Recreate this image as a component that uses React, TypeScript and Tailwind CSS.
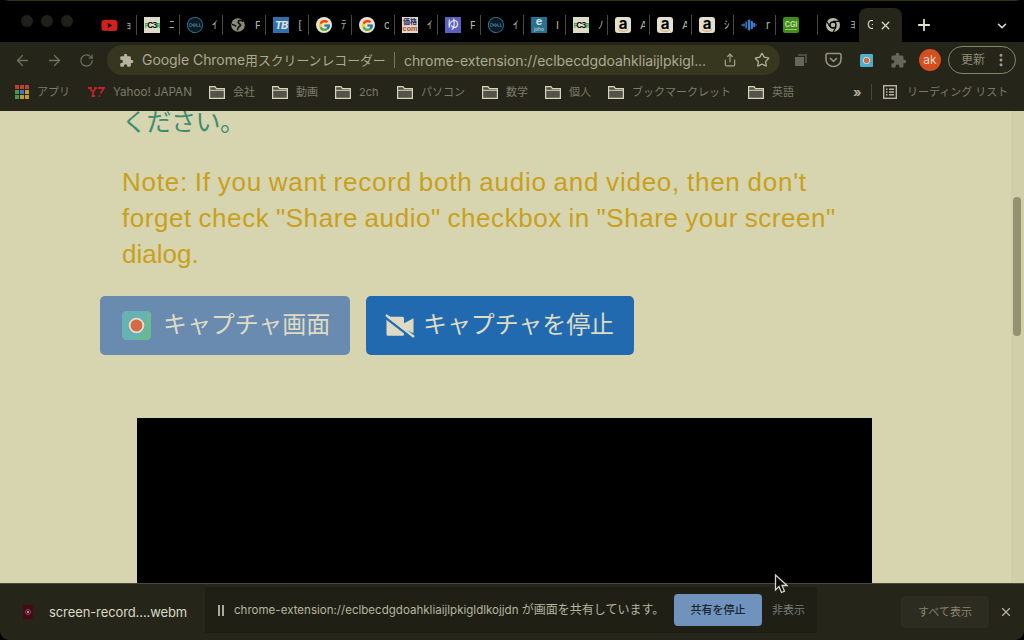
import React from "react";
import {
  ArrowLeft, ArrowRight, RotateCw, Star, Share, X, Plus, ChevronDown, EllipsisVertical,
} from "lucide-react";
import { FaYoutube } from "react-icons/fa";
import { FcGoogle } from "react-icons/fc";
import { SiDell } from "react-icons/si";
import { MdExtension } from "react-icons/md";

const DARK = "bg-[#26251a]";

const Tile = ({ className, children }: { className: string; children: React.ReactNode }) => (
  <span className={`flex h-4 w-4 shrink-0 flex-col items-center justify-center overflow-hidden ${className}`}>{children}</span>
);

const C3 = () => (
  <Tile className="bg-[#dedbc8] text-[8px] font-bold tracking-[-1px] text-black">
    <span><span className="text-[6px] text-green-600">F</span>C3<span className="text-[6px] text-green-600">R</span></span>
  </Tile>
);
const Amazon = () => (
  <Tile className="relative rounded-[3px] bg-[#e4e0d0]">
    <span className="-mt-1 text-[15px] font-bold leading-none text-black">a</span>
    <svg className="absolute bottom-0 left-0" width="16" height="5" viewBox="0 0 16 5"><path d="M3 1.5c3 2.4 7 2.4 10 0" stroke="#d9a066" strokeWidth="1" fill="none" /></svg>
  </Tile>
);
const Google = () => (
  <Tile className="rounded-full bg-[#e6e3d6]"><FcGoogle size={13} /></Tile>
);
const Dell = () => (
  <span className="flex h-4 w-4 shrink-0 items-center justify-center rounded-full bg-[#0c1a22]"><SiDell size={16} className="text-[#35789c]" /></span>
);

const tabs: { icon: React.ReactNode; text: string; w: string }[] = [
  { icon: <span className="flex h-4 w-4 shrink-0 items-center justify-center"><FaYoutube size={17} className="shrink-0 text-[#d4201c]" /></span>, text: "ｮ", w: "w-[43px]" },
  { icon: <C3 />, text: "ﾆ", w: "w-[43px]" },
  { icon: <Dell />, text: "ｲ", w: "w-[43px]" },
  {
    icon: (
      <svg width="16" height="16" viewBox="0 0 16 16" className="shrink-0">
        <circle cx="8" cy="8" r="6.8" fill="#8a8a7c" />
        <path d="M13.500 4.500c-2-1.800-5.300-1.300-5.300.7 0 1.500 2.300 1.500 2.300 3 0 1.200-1.500 1.300-2.200 2.300-.6.800-.3 2-1.300 2.500M2 7.500c2 0 2.800.8 4 1.800" stroke="#111" strokeWidth="1.7" fill="none" />
      </svg>
    ), text: "F", w: "w-[43px]",
  },
  { icon: <Tile className="bg-[#3170ae] text-[11px] font-bold italic tracking-[-1px] text-[#e4e4dc]">TB</Tile>, text: "[", w: "w-[43px]" },
  { icon: <Google />, text: "ﾃ", w: "w-[43px]" },
  { icon: <Google />, text: "c", w: "w-[43px]" },
  { icon: <Tile className="bg-[#dedbc8] text-[7px] font-bold leading-[7px] text-[#b34a34]"><span className="text-[#292968]">価格</span><span>com</span></Tile>, text: "ｲ", w: "w-[43px]" },
  { icon: <Tile className="bg-[#5a62bd] text-[12px] text-white">ゆ</Tile>, text: "F", w: "w-[43px]" },
  { icon: <Dell />, text: "ｲ", w: "w-[43px]" },
  { icon: <Tile className="bg-[#247291] text-[#dedbd0]"><span className="text-[11px] font-bold leading-[9px]">e</span><span className="text-[5px] leading-[7px]">joho</span></Tile>, text: "I", w: "w-[42px]" },
  { icon: <C3 />, text: "ﾉ", w: "w-[42px]" },
  { icon: <Amazon />, text: "A", w: "w-[42px]" },
  { icon: <Amazon />, text: "A", w: "w-[42px]" },
  { icon: <Amazon />, text: "ｼ", w: "w-[42px]" },
  {
    icon: (
      <svg width="16" height="16" viewBox="0 0 16 16" className="shrink-0">
        <path d="M.5 8h1.500M3 6.500v3M5.200 4.500v7" stroke="#3d7fc8" strokeWidth="1.500" />
        <path d="M6.800 3l2.400-.8v11.600L6.800 13zM9.800 3.500l2.300 1v7l-2.300 1zM12.300 6h1.700v4h-1.700zM14 7.500h2v1h-2z" fill="#3d7fc8" />
      </svg>
    ), text: "r", w: "w-[42px]",
  },
  { icon: <Tile className="rounded-[2px] bg-[#3f8f17] text-[7px] font-bold leading-[8px] text-[#c8dba8]"><span>CGI</span><span className="h-px w-3 bg-[#9cc47a]" /></Tile>, text: "", w: "w-[42px]" },
  {
    icon: (
      <svg width="16" height="16" viewBox="0 0 16 16" className="shrink-0">
        <circle cx="8" cy="8" r="7" fill="#b8b8a6" />
        <path d="M8 4.400h6M4.900 9.800 2 4.700M11.100 9.800 8.200 15" stroke="#000" strokeWidth="1.200" />
        <circle cx="8" cy="8" r="3" fill="#b8b8a6" stroke="#000" strokeWidth="1.400" />
      </svg>
    ), text: "ﾖ", w: "w-[41px]",
  },
];

const Folder = () => (
  <svg width="16" height="13" viewBox="0 0 16 13" className="shrink-0">
    <path d="M.6 12.400V.6h5.400l1.500 2h7.900v9.800z" fill="#53534a" stroke="#d5d5b8" strokeWidth="1.200" />
    <path d="M1 4.300h14" stroke="#d5d5b8" />
  </svg>
);

const folders: [string, string][] = [
  ["会社", "w-[63px]"], ["動画", "w-[63px]"], ["2ch", "w-[62px]"], ["パソコン", "w-[85px]"],
  ["数学", "w-[63px]"], ["個人", "w-[63px]"], ["ブックマークレット", "w-[140px]"], ["英語", "w-[105px]"],
];

const appDots = [
  "bg-[#c43d32]", "bg-[#c43d32]", "bg-[#c43d32]",
  "bg-[#3f9c52]", "bg-[#3c78c8]", "bg-[#c49a32]",
  "bg-[#3f9c52]", "bg-[#c49a32]", "bg-[#c49a32]",
];

const Recorder = ({ className, bg, edge }: { className: string; bg: string; edge: string }) => (
  <svg viewBox="0 0 28 28" className={className}>
    <rect width="28" height="28" rx="4" fill={bg} />
    <path d="M24 0a4 4 0 0 1 4 4v20a4 4 0 0 1-4 4H10l12-7z" fill={edge} />
    <circle cx="14" cy="14" r="7.500" fill="#e6ddc8" />
    <circle cx="14" cy="14" r="5.700" fill="#d66a45" />
  </svg>
);

export default function App() {
  return (
    <div className="h-[640px] w-[1024px] overflow-hidden bg-black font-[Inter,'Noto_Sans_CJK_JP',sans-serif]">
      <div className="flex h-full flex-col overflow-hidden rounded-[9px]">
        <div className="flex h-[42px] shrink-0 border-t border-[#34340c] bg-black">
          <div className="flex w-[94px] shrink-0 gap-2 pl-[21px] pt-[14px]">
            {[0, 1, 2].map((i) => <span key={i} className="h-3 w-3 rounded-full bg-[#20201a]" />)}
          </div>
          {tabs.map((t, i) => (
            <div key={i} className={`flex shrink-0 items-center pl-[7px] pt-[7px] ${t.w}`}>
              {t.icon}
              <span className="ml-[9px] w-[5px] overflow-hidden whitespace-nowrap text-[11px] leading-4 text-[#b5b5a0]">{t.text}</span>
              {i < tabs.length - 1 && <span className="ml-auto h-5 w-px shrink-0 bg-[#4b4b38]" />}
            </div>
          ))}
          <div className="flex min-w-0 flex-1 items-start">
            <div className={`mt-[7px] flex h-[34px] w-[43px] shrink-0 items-center rounded-t-lg pl-2 ${DARK}`}>
              <span className="w-[6px] overflow-hidden text-[12px] text-[#dadac4]">G</span>
              <X size={13} strokeWidth={2.400} className="ml-[6px] text-[#dadac4]" />
            </div>
            <Plus size={18} strokeWidth={2.400} className="ml-[13px] mt-[15px] shrink-0 text-[#e2e2cc]" />
            <ChevronDown size={14} strokeWidth={2.800} className="ml-auto mr-[15px] mt-[18px] shrink-0 text-[#dadac4]" />
          </div>
        </div>

        <div className={`flex h-[36px] shrink-0 items-center text-[#70705f] ${DARK}`}>
          <ArrowLeft size={17} strokeWidth={1.800} className="ml-[14px] shrink-0" />
          <ArrowRight size={17} strokeWidth={1.800} className="ml-[15px] shrink-0" />
          <RotateCw size={15} strokeWidth={1.900} className="ml-[16px] shrink-0" />
          <div className="ml-[13px] flex h-[30px] w-[673px] shrink-0 items-center rounded-full bg-[#37361f]">
            <MdExtension size={15} className="ml-[12px] shrink-0 text-[#b5b5a0]" />
            <span className="ml-[8px] w-[245px] shrink-0 whitespace-nowrap text-[14px] tracking-[-0.05px] text-[#aaaa92]">Google Chrome<span className="text-[12.850px] tracking-normal">用スクリーンレコーダー</span></span>
            <span className="ml-[7px] h-4 w-px bg-[#77775f]" />
            <span className="ml-[9px] w-[303px] shrink-0 whitespace-nowrap text-[14px] tracking-[-0.080px] text-[#aaaa92]">chrome-extension://eclbecdgdoahkliaijlpkigl...</span>
            <Share size={14} className="ml-[16px] shrink-0 text-[#a5a590]" />
            <Star size={16} className="ml-[17px] shrink-0 text-[#b0b09a]" />
          </div>
          <svg width="14" height="14" viewBox="0 0 14 14" className="ml-[14px] shrink-0"><path d="M4 1h9v9h-2V3H4z" fill="#4c4c40" /><path d="M1 4h9v9H1z" fill="#66665a" /></svg>
          <svg width="17" height="16" viewBox="0 0 17 16" className="ml-[17px] shrink-0" fill="none" stroke="#92927e" strokeWidth="1.600"><path d="M2.500 1.500h12q1.500 0 1.500 1.500v4.500c0 4-3.500 7-7.500 7S1 11.500 1 7.500V3q0-1.500 1.500-1.500z" /><path d="m5 6 3.500 3.300L12 6" /></svg>
          <Recorder className="ml-[18px] h-[13px] w-[13px] shrink-0" bg="#4fb0d6" edge="#4fb0c4" />
          <MdExtension size={17} className="ml-[17px] shrink-0 text-[#66665a]" />
          <span className="ml-[12px] flex h-[22px] w-[22px] shrink-0 items-center justify-center rounded-full bg-[#d34e20] text-[12px] text-[#eadbc0]">ak</span>
          <span className="ml-[7px] flex h-7 w-[68px] shrink-0 items-center rounded-full border border-[#7b8a66] pl-3 text-[12px] text-[#8c8c74]">
            更新<EllipsisVertical size={16} strokeWidth={2.500} className="ml-[8px] shrink-0 text-[#a0a084]" />
          </span>
        </div>

        <div className={`flex h-[33px] shrink-0 items-center whitespace-nowrap pb-[5px] text-[11px] text-[#7c7c68] ${DARK}`}>
          <div className="ml-[15px] grid w-[14px] grid-cols-3 gap-[1px]">
            {appDots.map((c, i) => <span key={i} className={`h-[4px] w-[4px] ${c}`} />)}
          </div>
          <span className="ml-[8px] w-[51px]">アプリ</span>
          <svg width="17" height="10" viewBox="0 0 17 10" className="mr-[8px] shrink-0" fill="none" stroke="#c4202a" strokeWidth="1.800"><path d="M0 1h4M6 1h3M1.500 1l3.500 4 2.800-4M5 5v4M3.500 9h3.500M10 1h6l-3.500 5.500M11.500 8.200v1.500" /></svg>
          <span className="w-[96px] pt-px text-[11.650px]">Yahoo! JAPAN</span>
          {folders.map(([name, w]) => (
            <span key={name} className={`flex shrink-0 items-center gap-2 ${w}`}><Folder />{name}</span>
          ))}
          <span className="w-[18px] text-[13px] font-bold leading-4 text-[#b0b09a]">»</span>
          <span className="h-4 w-px bg-[#49493a]" />
          <svg width="14" height="14" viewBox="0 0 14 14" className="ml-[11px] shrink-0" fill="none" stroke="#b5b5a0" strokeWidth="1.400"><rect x=".7" y=".7" width="12.600" height="12.600" /><path d="M3 4.200h1.500M3 7h1.500M3 9.800h1.500M6 4.200h5M6 7h5M6 9.800h5" /></svg>
          <span className="ml-[10px]">リーディング リスト</span>
        </div>

        <main className="flex h-[472px] shrink-0 justify-between overflow-hidden bg-[#d6d5b0]">
          <div className="w-[900px]">
            <div className="ml-[122px] font-['Liberation_Sans','Noto_Sans_CJK_JP',sans-serif] text-[26px] leading-[36px]">
              <p className="-mt-[7px] text-[25px] tracking-[-0.5px] text-[#3c8c70]">ください。</p>
              <p className="mt-[24px] whitespace-nowrap tracking-[0.760px] text-[#c9a01c] [word-spacing:-1.100px]">Note: If you want record both audio and video, then don't<br /><span className="tracking-[0.560px]">forget check "Share audio" checkbox in "Share your screen"</span><br /><span className="tracking-normal">dialog.</span></p>
            </div>
            <div className="ml-[100px] mt-[24px] flex gap-4 text-[24px] leading-none text-[#dedbc4]">
              <button className="flex h-[59px] w-[250px] items-center whitespace-nowrap rounded-[5px] bg-[#698bb0] pl-[22px]">
                <Recorder className="mr-[12px] h-[29px] w-[29px] shrink-0" bg="#66b2b4" edge="#6ab894" /><span className="-mt-[2px] tracking-[-0.1px]">キャプチャ画面</span>
              </button>
              <button className="flex h-[59px] w-[268px] items-center whitespace-nowrap rounded-[5px] bg-[#226ab0] pl-[19px]">
                <svg width="30" height="24" viewBox="0 0 30 24" className="mr-[8px] shrink-0">
                  <path d="M3 2.800h14.500q1.500 0 1.500 1.500v5l9.500-5v15l-9.500-4.500v5.400q0 1.500-1.500 1.500H3q-1.500 0-1.500-1.500V4.300q0-1.500 1.500-1.500z" fill="#dedbc4" />
                  <path d="M0 3.200l27.500 21.300" stroke="#226ab0" strokeWidth="2.400" />
                  <path d="M1.800 1.600l26.400 20.600" stroke="#dedbc4" strokeWidth="2.400" strokeLinecap="round" />
                </svg>
                <span className="-mt-[2px] tracking-[-0.1px]">キャプチャを停止</span>
              </button>
            </div>
            <div className="ml-[137px] mt-[63px] h-[165px] w-[735px] bg-black" />
          </div>
          <div className="w-[13px] bg-[#d0cfaa] pl-[2px] pt-[86px]">
            <div className="h-[139px] w-2 rounded-full bg-[#929270]" />
          </div>
        </main>

        <footer className={`flex h-[57px] shrink-0 items-center whitespace-nowrap border-t border-[#494940] ${DARK}`}>
          <svg width="10" height="14" viewBox="0 0 10 14" className="ml-[23px] shrink-0"><rect width="10" height="14" rx="1" fill="#480818" /><circle cx="5" cy="7" r="2.500" fill="#181010" stroke="#a05060" /><circle cx="5" cy="7" r="1" fill="#ccc" /></svg>
          <span className="ml-[16px] w-[156px] pt-[2px] text-[13px] tracking-[-0.1px] text-[#dadac4]">screen-record....webm</span>
          <div className="-mt-1 flex h-[46px] w-[612px] shrink-0 items-center bg-[#201f15] text-[11px]">
            <span className="ml-[13px] h-[11px] w-[6px] border-x-2 border-[#aaaa98]" />
            <span className="ml-[10px] w-[440px] text-[11.550px] text-[#b5b5a0]">chrome-extension://eclbecdgdoahkliaijlpkigldlkojjdn <span className="text-[12px]">が画面を共有しています。</span></span>
            <span className="flex h-8 w-[88px] items-center justify-center rounded bg-[#6f93bc] font-medium text-[#1c2430]">共有を停止</span>
            <span className="ml-[10px] text-[#777d78]">非表示</span>
          </div>
          <span className="ml-[84px] flex h-8 w-[88px] shrink-0 items-center justify-center rounded bg-[#2d2c20] text-[11px] text-[#85856e]">すべて表示</span>
          <X size={14} className="ml-[10px] shrink-0 text-[#b5b5a0]" />
        </footer>
      </div>
      <svg width="14" height="20" viewBox="0 0 14 20" className="absolute left-[774px] top-[574px]"><path d="M1.500 1v15l3.500-3.500 2.500 6 3-1.300-2.500-5.700h5z" fill="#080808" stroke="#d5d5c4" strokeWidth="1.300" /></svg>
    </div>
  );
}
